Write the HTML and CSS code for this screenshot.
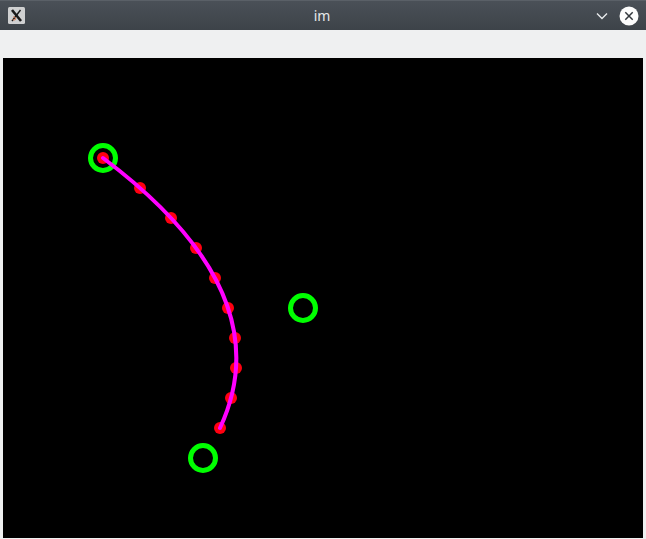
FILE: index.html
```html
<!DOCTYPE html>
<html>
<head>
<meta charset="utf-8">
<link rel="stylesheet" href="styles.css">
</head>
<body>
<div class="window">
  <div class="titlebar">
    <div class="app-icon">
      <svg width="17" height="17" viewBox="0 0 17 17">
        <rect x="0" y="0" width="17" height="17" rx="1.5" fill="#cfd0d1"/>
        <path d="M4 3 L13 14" stroke="#1a1a1a" stroke-width="2.6"/>
        <path d="M12.5 3 L4 14" stroke="#1a1a1a" stroke-width="1.4"/>
        <path d="M5 10 Q7 9 8 12 Q6 14 4.5 12.5" stroke="#d9805a" stroke-width="1" fill="none"/>
      </svg>
    </div>
    <div class="title">im</div>
    <div class="controls">
      <svg class="chevron" width="12" height="8" viewBox="0 0 12 8">
        <path d="M1 1.5 L6 6.5 L11 1.5" stroke="#e8eaec" stroke-width="1.4" fill="none"/>
      </svg>
      <svg class="close" width="20" height="20" viewBox="0 0 20 20">
        <circle cx="10" cy="10" r="9.5" fill="#fcfcfc"/>
        <path d="M6.3 6.3 L13.7 13.7 M13.7 6.3 L6.3 13.7" stroke="#31363b" stroke-width="1.5"/>
      </svg>
    </div>
  </div>
  <div class="body-area">
    <svg class="canvas" width="640" height="480" viewBox="0 0 640 480">
      <rect width="640" height="480" fill="#000"/>
      <g fill="none" stroke="#00ff00" stroke-width="5">
        <circle cx="100" cy="100" r="12.5"/>
        <circle cx="300" cy="250" r="12.5"/>
        <circle cx="200" cy="400" r="12.5"/>
      </g>
      <g fill="#ff0010">
        <circle cx="100" cy="100" r="6"/>
        <circle cx="137" cy="130" r="6"/>
        <circle cx="168" cy="160" r="6"/>
        <circle cx="193" cy="190" r="6"/>
        <circle cx="212" cy="220" r="6"/>
        <circle cx="225" cy="250" r="6"/>
        <circle cx="232" cy="280" r="6"/>
        <circle cx="233" cy="310" r="6"/>
        <circle cx="228" cy="340" r="6"/>
        <circle cx="217" cy="370" r="6"/>
      </g>
      <path d="M100 100 Q280 235 217 370" fill="none" stroke="#ff00ff" stroke-width="4" stroke-linecap="round"/>
    </svg>
  </div>
</div>
</body>
</html>
```
FILE: styles.css
```css
html, body {
  margin: 0;
  padding: 0;
  background: #eff0f1;
}
.window {
  width: 646px;
  height: 539px;
  display: flex;
  flex-direction: column;
}
.titlebar {
  height: 30px;
  box-sizing: border-box;
  border-top: 1px solid #5a6067;
  background: linear-gradient(#4a5057, #3d4349);
  display: flex;
  align-items: center;
  padding: 0 7px 0 8px;
}
.app-icon {
  width: 17px;
  height: 17px;
  margin-top: -1px;
}
.app-icon svg, .controls svg {
  display: block;
}
.title {
  flex: 1;
  text-align: center;
  color: #e6e8ea;
  font-family: "Noto Sans", "DejaVu Sans", sans-serif;
  font-size: 14px;
  padding-left: 23px;
  margin-top: -1px;
}
.controls {
  display: flex;
  align-items: center;
  gap: 11px;
}
.body-area {
  flex: 1;
  padding: 28px 3px 1px 3px;
  background: #eff0f1;
}
.canvas {
  display: block;
}
```
